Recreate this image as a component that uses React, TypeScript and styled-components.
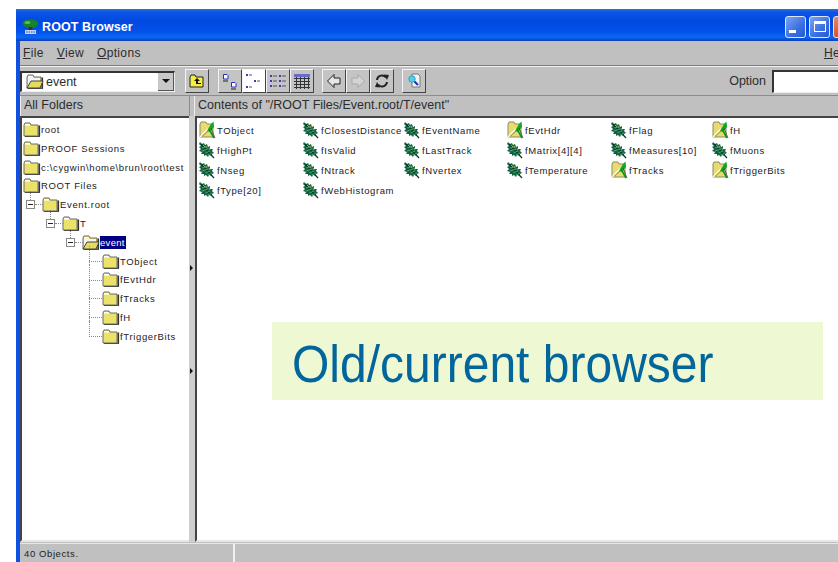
import styled, { createGlobalStyle } from 'styled-components'

const GlobalStyle = createGlobalStyle`
  html, body {
    margin: 0;
    padding: 0;
    background: #fff;
    overflow: hidden;
  }
  body {
    width: 838px;
    height: 562px;
    font-family: "Liberation Sans", Arial, sans-serif;
  }
`

const Desktop = styled.div`
  width: 838px;
  height: 562px;
  padding: 9px 0 0 16px;
  box-sizing: border-box;
  overflow: hidden;
  position: relative;
`

const Window = styled.div`
  width: 840px;
  height: 553px;
  display: flex;
  flex-direction: column;
  background: #c0c0c0;
  border-left: 4px solid #0f50e0;
  box-sizing: border-box;
  border-top-left-radius: 2px;
`

const TitleBar = styled.div`
  height: 32px;
  margin-left: -4px;
  flex: none;
  display: flex;
  align-items: center;
  padding: 3px 2px 0 6px;
  box-sizing: border-box;
  background: linear-gradient(180deg, #2a6fd8 0%, #0a55e6 10%, #0048e0 40%, #0352ea 72%, #0a68f2 88%, #0a3fc0 100%);
`

const AppIcon = styled.svg`
  width: 17px;
  height: 16px;
  flex: none;
`

const TitleText = styled.span`
  margin-left: 3px;
  color: #fff;
  font-size: 12.5px;
  font-weight: 700;
  letter-spacing: 0.1px;
`

const WindowButtons = styled.div`
  display: flex;
  gap: 3px;
  margin-left: auto;
`

const WindowButton = styled.div<{ $close?: boolean }>`
  width: 21px;
  height: 22px;
  box-sizing: border-box;
  border: 1px solid #dfe8fb;
  border-radius: 3px;
  background: ${p => (p.$close
    ? 'linear-gradient(135deg, #e88a6a, #d8502a 60%, #c03a18)'
    : 'linear-gradient(135deg, #7aa4f0, #3a6fe4 60%, #2a58d0)')};
  display: flex;
  align-items: center;
  justify-content: center;
  flex: none;
`

const MinimizeGlyph = styled.div`
  width: 7px;
  height: 3px;
  background: #fff;
  margin: 9px 6px 0 0;
`

const MaximizeGlyph = styled.div`
  width: 12px;
  height: 11px;
  box-sizing: border-box;
  border: 1px solid #fff;
  border-top-width: 3px;
`

const MenuBar = styled.div`
  height: 25px;
  flex: none;
  display: flex;
  align-items: center;
  padding: 0 0 0 3px;
  gap: 13px;
  font-size: 12px;
  color: #2c2c2c;
  border-bottom: 1px solid #7c7c7c;
  box-sizing: border-box;
`

const MenuItem = styled.span<{ $right?: boolean }>`
  letter-spacing: 0.35px;
  ${p => p.$right && 'margin-left: auto; margin-right: 6px;'}
  u {
    text-underline-offset: 1px;
  }
`

const ToolBar = styled.div`
  height: 30px;
  flex: none;
  display: flex;
  align-items: center;
  border-top: 1px solid #f2f2f2;
  border-bottom: 1px solid #8c8c8c;
  box-sizing: border-box;
`

const Combo = styled.div`
  width: 155px;
  height: 21px;
  box-sizing: border-box;
  flex: none;
  display: flex;
  align-items: center;
  background: #fff;
  border-top: 2px solid #333;
  border-left: 2px solid #333;
  border-right: 1px solid #eee;
  border-bottom: 1px solid #eee;
  padding-left: 4px;
  font-size: 12.5px;
  color: #2c2c2c;
`

const ComboLabel = styled.span`
  margin-left: 2px;
`

const ComboArrow = styled.div`
  margin-left: auto;
  width: 16px;
  height: 18px;
  flex: none;
  background: #c8c8c8;
  border-right: 1px solid #555;
  border-bottom: 1px solid #555;
  box-sizing: border-box;
  display: flex;
  align-items: center;
  justify-content: center;
  &::after {
    content: '';
    border-left: 4px solid transparent;
    border-right: 4px solid transparent;
    border-top: 4px solid #111;
  }
`

const ButtonGroup = styled.div<{ $gap: number }>`
  display: flex;
  margin-left: ${p => p.$gap}px;
`

const ToolButton = styled.div<{ $pressed?: boolean }>`
  width: 24px;
  height: 24px;
  box-sizing: border-box;
  display: flex;
  align-items: center;
  justify-content: center;
  background: ${p => (p.$pressed ? '#fff' : '#c4c4c4')};
  border-top: 1px solid #f4f4f4;
  border-left: 1px solid #f4f4f4;
  border-right: 1px solid #444;
  border-bottom: 1px solid #444;
`

const OptionLabel = styled.span`
  margin-left: auto;
  margin-right: 6px;
  font-size: 12.5px;
  color: #2c2c2c;
`

const OptionInput = styled.div`
  width: 84px;
  height: 23px;
  box-sizing: border-box;
  background: #fff;
  border-top: 2px solid #333;
  border-left: 2px solid #333;
  border-bottom: 1px solid #eee;
  flex: none;
`

const Headers = styled.div`
  height: 20px;
  flex: none;
  display: flex;
  font-size: 12.5px;
  color: #2c2c2c;
`

const HeaderCell = styled.div<{ $width?: number }>`
  ${p => (p.$width ? `width: ${p.$width}px; flex: none; margin-right: 4px;` : 'flex: 1;')}
  box-sizing: border-box;
  display: flex;
  align-items: center;
  padding: 0 0 2px 3px;
  white-space: nowrap;
  overflow: hidden;
  border-left: 1px solid #eee;
  border-right: 1px solid #8c8c8c;
`

const Panes = styled.div`
  flex: 1;
  min-height: 0;
  display: flex;
`

const Pane = styled.div`
  background: #fff;
  box-sizing: border-box;
  border-top: 2px solid #444;
  border-left: 2px solid #444;
  border-bottom: 2px solid #e6e6e6;
  position: relative;
`

const TreePane = styled(Pane)`
  width: 169px;
  flex: none;
  padding-top: 2px;
`

const Splitter = styled.div`
  width: 6px;
  flex: none;
  position: relative;
  background-image: radial-gradient(#8a8a8a 0.5px, transparent 0.6px);
  background-size: 2px 2px;
  background-color: #cfcfcf;
`

const SplitArrow = styled.span<{ $top: number }>`
  position: absolute;
  left: 1px;
  top: ${p => p.$top}px;
  width: 0;
  height: 0;
  border-left: 3px solid #111;
  border-top: 3px solid transparent;
  border-bottom: 3px solid transparent;
`

const ListPane = styled(Pane)`
  flex: 1;
  padding: 2px 0 0 2px;
`

const TreeRow = styled.div<{ $depth: number; $branch?: boolean }>`
  height: 18.82px;
  display: flex;
  align-items: center;
  position: relative;
  font-size: 9.5px;
  letter-spacing: 0.65px;
  color: #222;
  white-space: nowrap;
  padding-left: ${p => (p.$depth === 0 ? 1 : p.$branch ? 20 * (p.$depth - 1) + 1 : 20 * p.$depth + 20)}px;
`

const Expander = styled.span`
  width: 9px;
  height: 9px;
  flex: none;
  margin-left: 3px;
  margin-right: 7px;
  box-sizing: border-box;
  border: 1px solid #888;
  background: #fff;
  position: relative;
  z-index: 1;
  &::after {
    content: '';
    position: absolute;
    left: 1px;
    top: 3px;
    width: 5px;
    height: 1px;
    background: #222;
  }
`

const DottedH = styled.span<{ $left: number; $width: number }>`
  position: absolute;
  left: ${p => p.$left}px;
  width: ${p => p.$width}px;
  top: 9px;
  border-top: 1px dotted #888;
`

const DottedV = styled.span<{ $left: number; $top: number; $height: number }>`
  position: absolute;
  left: ${p => p.$left}px;
  top: ${p => p.$top}px;
  height: ${p => p.$height}px;
  border-left: 1px dotted #888;
`

const RowLabel = styled.span<{ $selected?: boolean }>`
  ${p => p.$selected && 'background: #000080; color: #fff; letter-spacing: 0.3px; padding: 1px 1px 1px 0;'}
`

const ListGrid = styled.div`
  display: grid;
  grid-template-columns: 104px 101px 103px 104px 101px auto;
  grid-auto-rows: 20px;
  width: 640px;
`

const ListItem = styled.div`
  display: flex;
  align-items: center;
  font-size: 9.5px;
  letter-spacing: 0.6px;
  color: #222;
  white-space: nowrap;
  min-width: 0;
`

const ItemLabel = styled.span`
  margin-left: 1px;
`

const StatusBar = styled.div`
  height: 18px;
  flex: none;
  display: flex;
  margin-top: 1px;
  font-size: 9.5px;
  letter-spacing: 0.6px;
  color: #222;
  border-top: 1px solid #e8e8e8;
`

const StatusCell = styled.div<{ $width?: number }>`
  ${p => (p.$width ? `width: ${p.$width}px; flex: none;` : 'flex: 1;')}
  box-sizing: border-box;
  padding: 4px 0 0 4px;
  border-right: 2px solid #f0f0f0;
`

const Callout = styled.div`
  position: absolute;
  left: 272px;
  top: 322px;
  width: 551px;
  height: 78px;
  box-sizing: border-box;
  padding: 7px 0 0 20px;
  display: flex;
  align-items: center;
  background: #eef9d3;
  color: #02659c;
  font-size: 48px;
`

const CalloutText = styled.span`
  display: inline-block;
  transform: scaleY(1.08);
`

const Folder = ({ open }: { open?: boolean }) => (
  <svg width="18" height="15" viewBox="0 0 18 15" style={{ flex: 'none' }}>
    <path d="M1 3 L2 1 H7 L8 3 H15 V14 H1 Z" fill="#ebe26a" stroke="#6a6a6a" strokeWidth="1" />
    <path d="M2 2 H7 V3.6 H2 Z" fill="#fff" />
    <rect x="15.5" y="3.5" width="1.6" height="11" fill="#333" />
    <rect x="2" y="14.2" width="15" height="0.9" fill="#333" />
    {open && <path d="M2 4 H14 V7 H5 L2 12 Z" fill="#f4f4f4" />}
    {open && <path d="M1 14 L5 7 H17 L14 14 Z" fill="#e6dc5a" stroke="#444" strokeWidth="1" />}
  </svg>
)

// broad serrated leaf running from top left down to its stem at the bottom right
const Leaf = () => (
  <svg width="17" height="17" viewBox="0 0 17 17" style={{ flex: 'none' }}>
    <path d="M1 0 L3 2 L5 1 L6 3 L8 2 L9 5 L11 4 L11 7 L14 7 L13 9 L15 11 L13 12 L13 14 L10 13 L9 15 L7 13 L5 14 L5 12 L2 12 L3 10 L0 9 L2 7 L0 5 L2 4 L0 2 Z" fill="#14684a" />
    <path d="M2 2 L15 16" stroke="#083828" strokeWidth="1.2" fill="none" />
    <path d="M3 6 L7 5 M3 9 L9 7 M6 11 L11 9 M9 13 L13 11" stroke="#58a868" strokeWidth="0.9" />
    <path d="M4 3 L6 5 M7 4 L8 6 M10 6 L11 8" stroke="#b4c050" strokeWidth="0.8" />
    <path d="M2 5 L4 8 M4 11 L7 11" stroke="#0c4c34" strokeWidth="0.8" />
  </svg>
)

const FolderLeaf = () => (
  <svg width="17" height="18" viewBox="0 0 17 18" style={{ flex: 'none' }}>
    <path d="M1 3 L2 1 H7 L8 3 H14 V16 H1 Z" fill="#e8dc70" stroke="#8a8a6a" strokeWidth="1" />
    <path d="M1 16 L9 8" stroke="#fff" strokeWidth="1.5" />
    <path d="M3 15.5 L10 9" stroke="#b8a83c" strokeWidth="1.2" />
    <path d="M8 10 L12 3 L14.5 0.5 L15 6 L11 11 Z" fill="#10a820" />
    <path d="M10 8 L15 17" stroke="#0a9a1a" strokeWidth="1.6" />
    <path d="M12 7 L16 17" stroke="#333" strokeWidth="0.7" />
  </svg>
)

const treeIcon = (
  <AppIcon viewBox="0 0 17 16">
    <ellipse cx="8.5" cy="4.5" rx="8" ry="4.2" fill="#178226" />
    <ellipse cx="5.5" cy="3.4" rx="3" ry="1.5" fill="#4fc04a" />
    <path d="M7 8 H10 L10.5 11 H6.5 Z" fill="#4a2f16" />
    <rect x="3" y="11" width="11" height="4" fill="#c8d4f4" />
    <path d="M4 13 H13" stroke="#3a4a80" strokeWidth="1" strokeDasharray="1.5 1" />
  </AppIcon>
)

type TreeEntry = {
  label: string
  depth: number
  branch?: boolean
  open?: boolean
  selected?: boolean
}

const treeEntries: TreeEntry[] = [
  { label: 'root', depth: 0 },
  { label: 'PROOF Sessions', depth: 0 },
  { label: 'c:\\cygwin\\home\\brun\\root\\test', depth: 0 },
  { label: 'ROOT Files', depth: 0 },
  { label: 'Event.root', depth: 1, branch: true },
  { label: 'T', depth: 2, branch: true },
  { label: 'event', depth: 3, branch: true, open: true, selected: true },
  { label: 'TObject', depth: 3 },
  { label: 'fEvtHdr', depth: 3 },
  { label: 'fTracks', depth: 3 },
  { label: 'fH', depth: 3 },
  { label: 'fTriggerBits', depth: 3 },
]

const listItems: { label: string; folder?: boolean }[] = [
  { label: 'TObject', folder: true },
  { label: 'fClosestDistance' },
  { label: 'fEventName' },
  { label: 'fEvtHdr', folder: true },
  { label: 'fFlag' },
  { label: 'fH', folder: true },
  { label: 'fHighPt' },
  { label: 'fIsValid' },
  { label: 'fLastTrack' },
  { label: 'fMatrix[4][4]' },
  { label: 'fMeasures[10]' },
  { label: 'fMuons' },
  { label: 'fNseg' },
  { label: 'fNtrack' },
  { label: 'fNvertex' },
  { label: 'fTemperature' },
  { label: 'fTracks', folder: true },
  { label: 'fTriggerBits', folder: true },
  { label: 'fType[20]' },
  { label: 'fWebHistogram' },
]

function App() {
  return (
    <Desktop>
      <GlobalStyle />
      <Window>
        <TitleBar>
          {treeIcon}
          <TitleText>ROOT Browser</TitleText>
          <WindowButtons>
            <WindowButton><MinimizeGlyph /></WindowButton>
            <WindowButton><MaximizeGlyph /></WindowButton>
            <WindowButton $close />
          </WindowButtons>
        </TitleBar>
        <MenuBar>
          <MenuItem><u>F</u>ile</MenuItem>
          <MenuItem><u>V</u>iew</MenuItem>
          <MenuItem><u>O</u>ptions</MenuItem>
          <MenuItem $right><u>H</u>elp</MenuItem>
        </MenuBar>
        <ToolBar>
          <Combo>
            <Folder open />
            <ComboLabel>event</ComboLabel>
            <ComboArrow />
          </Combo>
          <ButtonGroup $gap={10}>
            <ToolButton>
              <svg width="16" height="14" viewBox="0 0 16 14">
                <path d="M1 3 L2 1 H6 L7 3 H14 V13 H1 Z" fill="#f5ee40" stroke="#222" />
                <path d="M8 4 L5 7 H7 V10 H12 V9 H9 V7 H11 Z" fill="#111" />
              </svg>
            </ToolButton>
          </ButtonGroup>
          <ButtonGroup $gap={9}>
            <ToolButton>
              <svg width="18" height="18" viewBox="0 0 18 18">
                <path d="M2.5 2.5 H6 L7 3.5 V7 H2.5 Z M10.5 10.5 H14 L15 11.5 V15 H10.5 Z" fill="#fff" stroke="#2a2ac0" />
                <path d="M2 9 H7 M10 17 H15" stroke="#222" />
              </svg>
            </ToolButton>
            <ToolButton $pressed>
              <svg width="18" height="18" viewBox="0 0 18 18">
                <path d="M1 2 H3 V4 H1 Z M9 8 H11 V10 H9 Z M1 14 H3 V16 H1 Z" fill="#3a3ac8" />
                <path d="M4 3 H7 M12 9 H15 M4 15 H7" stroke="#555" />
              </svg>
            </ToolButton>
            <ToolButton>
              <svg width="18" height="18" viewBox="0 0 18 18">
                <path d="M1 3 H3 V5 H1 Z M1 8 H3 V10 H1 Z M1 13 H3 V15 H1 Z M10 3 H12 V5 H10 Z M10 8 H12 V10 H10 Z M10 13 H12 V15 H10 Z" fill="#3a3ac8" />
                <path d="M4 4 H8 M4 9 H8 M4 14 H8 M13 4 H17 M13 9 H17 M13 14 H17" stroke="#555" />
              </svg>
            </ToolButton>
            <ToolButton>
              <svg width="18" height="16" viewBox="0 0 18 16">
                <rect x="1" y="1" width="16" height="3" fill="#6a6ac8" />
                <path d="M1 5.5 H17 M1 8.5 H17 M1 11.5 H17 M1 14.5 H17 M3.5 4 V16 M7.5 4 V16 M11.5 4 V16 M15.5 4 V16" stroke="#333" />
              </svg>
            </ToolButton>
          </ButtonGroup>
          <ButtonGroup $gap={8}>
            <ToolButton>
              <svg width="16" height="16" viewBox="0 0 16 16">
                <path d="M8 1.5 L1.5 8 L8 14.5 V11 H14 V5 H8 Z" fill="#e6e6e6" stroke="#222" />
              </svg>
            </ToolButton>
            <ToolButton>
              <svg width="16" height="16" viewBox="0 0 16 16">
                <path d="M8 1.5 L14.5 8 L8 14.5 V11 H2 V5 H8 Z" fill="#d4d4d4" stroke="#a8a8a8" />
              </svg>
            </ToolButton>
            <ToolButton>
              <svg width="16" height="16" viewBox="0 0 16 16">
                <path d="M3 7 A5 5 0 0 1 12 4.5" fill="none" stroke="#222" strokeWidth="2" />
                <path d="M10 1.5 L15 2 L13 7 Z" fill="#222" />
                <path d="M13 9 A5 5 0 0 1 4 11.5" fill="none" stroke="#222" strokeWidth="2" />
                <path d="M6 14.5 L1 14 L3 9 Z" fill="#222" />
              </svg>
            </ToolButton>
          </ButtonGroup>
          <ButtonGroup $gap={8}>
            <ToolButton>
              <svg width="16" height="16" viewBox="0 0 16 16">
                <path d="M6 1 H12 L14 3 V14 H6 Z" fill="#f4f4f4" stroke="#777" />
                <circle cx="6" cy="6" r="3.2" fill="#50d0e8" stroke="#30a0c0" />
                <path d="M8.5 8.5 L12 12" stroke="#2030c0" strokeWidth="2.2" />
              </svg>
            </ToolButton>
          </ButtonGroup>
          <OptionLabel>Option</OptionLabel>
          <OptionInput />
        </ToolBar>
        <Headers>
          <HeaderCell $width={170}>All Folders</HeaderCell>
          <HeaderCell>Contents of "/ROOT Files/Event.root/T/event"</HeaderCell>
        </Headers>
        <Panes>
          <TreePane>
            {treeEntries.map(entry => (
              <TreeRow key={entry.label} $depth={entry.depth} $branch={entry.branch}>
                {entry.branch && (
                  <>
                    <DottedV $left={20 * (entry.depth - 1) + 8} $top={-4} $height={9} />
                    <DottedH $left={20 * (entry.depth - 1) + 13} $width={8} />
                    <Expander />
                  </>
                )}
                {entry.depth === 3 && !entry.branch && (
                  <>
                    <DottedV $left={67} $top={-6} $height={entry.label === 'fTriggerBits' ? 16 : 19} />
                    <DottedH $left={67} $width={13} />
                  </>
                )}
                <Folder open={entry.open} />
                <RowLabel $selected={entry.selected}>{entry.label}</RowLabel>
              </TreeRow>
            ))}
          </TreePane>
          <Splitter>
            <SplitArrow $top={149} />
            <SplitArrow $top={252} />
          </Splitter>
          <ListPane>
            <ListGrid>
              {listItems.map(item => (
                <ListItem key={item.label}>
                  {item.folder ? <FolderLeaf /> : <Leaf />}
                  <ItemLabel>{item.label}</ItemLabel>
                </ListItem>
              ))}
            </ListGrid>
          </ListPane>
        </Panes>
        <StatusBar>
          <StatusCell $width={215}>40 Objects.</StatusCell>
          <StatusCell />
        </StatusBar>
      </Window>
      <Callout><CalloutText>Old/current browser</CalloutText></Callout>
    </Desktop>
  )
}

export default App
